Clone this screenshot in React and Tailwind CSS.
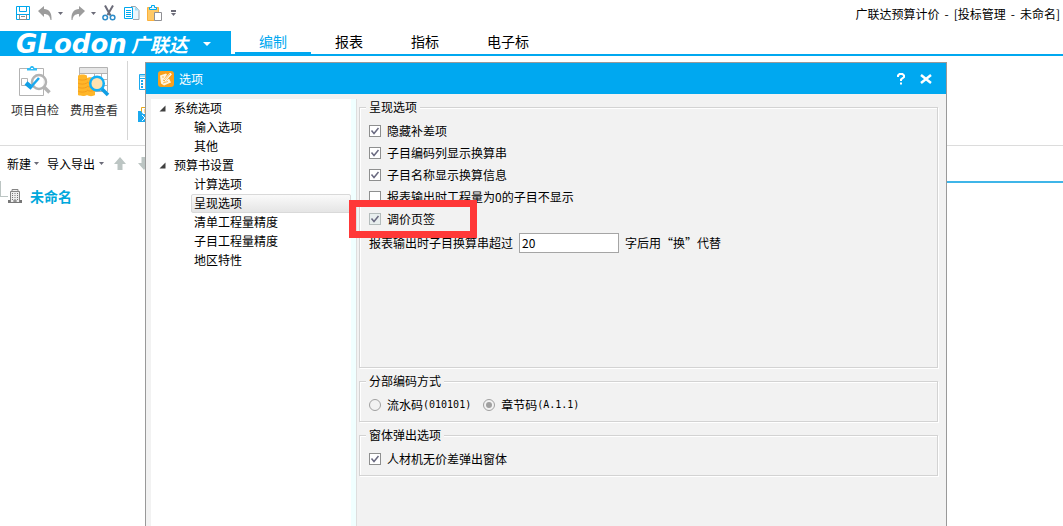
import React from "react";

function Caret({ className = "" }) {
  return (
    <svg className={className} width="5" height="3" viewBox="0 0 5 3" aria-hidden="true">
      <path d="M0 0h5L2.500 3z" fill="currentColor" />
    </svg>
  );
}

function SaveIcon() {
  return (
    <svg width="16" height="16" viewBox="0 0 16 16" fill="none">
      <path d="M1.500 1.500h13v13h-13z" stroke="#00a8ee" />
      <path d="M4.500 1.500v5h7v-5M2 9.500h12" stroke="#00a8ee" />
      <path d="M4.500 9.500v5h7v-5M6 11.500h4" stroke="#8b8b8b" />
    </svg>
  );
}

function UndoIcon({ flip = false }) {
  return (
    <svg width="14" height="14" viewBox="0 0 14 14" className={flip ? "-scale-x-100" : ""}>
      <path d="M0 5L6 0v3c5 0 8 3.500 7.500 11h-1C12 10 10 8 6 8v3z" fill="#9c9c9c" />
    </svg>
  );
}

function CutIcon() {
  return (
    <svg width="14" height="16" viewBox="0 0 14 16" fill="none">
      <path d="M3 .5l5.500 10M11 .5L5.500 10" stroke="#6b6b78" strokeWidth="2" />
      <circle cx="3.200" cy="12.500" r="2.300" stroke="#2d8cc8" strokeWidth="1.500" />
      <circle cx="10.600" cy="12.500" r="2.300" stroke="#2d8cc8" strokeWidth="1.500" />
    </svg>
  );
}

function CopyIcon() {
  return (
    <svg width="16" height="16" viewBox="0 0 16 16" fill="none">
      <path d="M7 1.500h4.500l3.500 4v9H9" fill="#eaf6fc" stroke="#a0a4a8" />
      <path d="M11 1.500v4h4z" fill="#9fdcf5" />
      <path d="M.5 2.500h8v11h-8z" fill="#fff" stroke="#00a8ee" />
      <path d="M2 5.500h5M2 7.500h5M2 9.500h5M2 11.500h5" stroke="#00a8ee" />
    </svg>
  );
}

function PasteIcon() {
  return (
    <svg width="16" height="17" viewBox="0 0 16 17" fill="none">
      <path d="M.5 2.500h11v13H.5z" fill="#ffc966" stroke="#fbb03b" />
      <path d="M2.500 4.500v-2h2v-2h3v2h2v2z" fill="#e8f8ff" stroke="#00a8ee" />
      <path d="M7.500 7.500h7v8h-7z" fill="#fff" stroke="#8f8f94" />
    </svg>
  );
}

function CheckProjectIcon() {
  return (
    <svg width="32" height="32" viewBox="0 0 32 32" fill="none">
      <path d="M.5 2.500h24v27H.5z" fill="#fff" stroke="#b3b3b3" />
      <path d="M2.500 12.500h6v7h-6z" stroke="#b3b3b3" />
      <path d="M8 4.500V2h2.500L12 0h2l1.500 2H18v2.500z" fill="#35bdf5" />
      <path d="M12 2.500h2" stroke="#fff" />
      <circle cx="20" cy="16" r="7" fill="#fff" fillOpacity=".85" stroke="#b3b3b3" strokeWidth="2.500" />
      <path d="M25 21l5.500 5.500" stroke="#b3b3b3" strokeWidth="3.500" />
      <path d="M7 17l6 5" stroke="#109fe5" strokeWidth="4.500" />
      <path d="M12 21l8-9" stroke="#1ba9ee" strokeWidth="2.500" />
    </svg>
  );
}

function FeeIcon() {
  return (
    <svg width="32" height="32" viewBox="0 0 32 32" fill="none">
      <path d="M1.500 1.500h28v24h-28z" fill="#fff" stroke="#b3b3b3" />
      <path d="M2 2h27v5H2z" fill="#e6e6e6" />
      <path d="M1 7.500h29M10 13.500h20M10 19.500h20M16.500 7v18M23.500 7v18" stroke="#b3b3b3" />
      <path d="M0 10c0-2 9-2 9 0v2c2-1.500 8-1 8 1.500V29c-2 1.500-6 1.500-8 0-2 1.500-7 1-9 0z" fill="#ffb629" />
      <path d="M0 13c2 1.500 6 1.500 9 0M0 17c2 1.500 6 1.500 9 0M0 21c2 1.500 6 1.500 9 0M0 25c2 1.500 6 1.500 9 0M9 16c2 1.500 5 1.500 8 0M9 20c2 1.500 5 1.500 8 0M9 24c2 1.500 5 1.500 8 0" stroke="#f0981a" strokeWidth=".8" />
      <circle cx="19" cy="17.500" r="6.800" fill="#ffe2b0" stroke="#14b0f5" strokeWidth="2.500" />
      <path d="M24 23l6 6" stroke="#109fe5" strokeWidth="3.500" />
    </svg>
  );
}

function CalculatorIcon() {
  return (
    <svg width="16" height="16" viewBox="0 0 16 16" fill="none">
      <path d="M1.500.5h13v15h-13z" fill="#fff" stroke="#1ba9ee" />
      <path d="M2 2h12" stroke="#9fdcf5" strokeWidth="2" />
      <path d="M2 4.500h12" stroke="#1ba9ee" />
      <path d="M3 7h2M7 7h2M3 10h2M7 10h2M3 13h2M7 13h2" stroke="#1ba9ee" strokeWidth="2" />
    </svg>
  );
}

function ExportIcon() {
  return (
    <svg width="16" height="16" viewBox="0 0 16 16" fill="none">
      <path d="M3.500.5h11v9h-11z" fill="#fff" stroke="#e8a91a" />
      <path d="M6 3h6M6 5h6" stroke="#ffb629" />
      <path d="M0 4h3l2 3h11v8H0z" fill="#1ba9ee" />
      <path d="M4 8l6 6M10 8l-6 6" stroke="#fff" />
    </svg>
  );
}

function MoveArrow({ down = false }) {
  return (
    <svg width="12" height="13" viewBox="0 0 12 13" className={down ? "rotate-180" : ""}>
      <path d="M6 0l6 7H8.500v6h-5V7H0z" fill="#bcc5c3" />
    </svg>
  );
}

function BuildingIcon() {
  return (
    <svg width="14" height="14" viewBox="0 0 14 14" fill="none">
      <path d="M4 2V.5h6V2M2.500 13V2.500h9V13" fill="#eee" stroke="#858585" />
      <path d="M4 4.500h1M6.500 4.500h1M9 4.500h1M4 6.500h1M6.500 6.500h1M9 6.500h1M4 8.500h1M6.500 8.500h1M9 8.500h1M4 10.500h1M9 10.500h1" stroke="#777" />
      <path d="M0 12.500h2M12 12.500h2" stroke="#777" strokeWidth="3" />
      <path d="M0 13.500h14M6 11h2v2H6z" stroke="#777" />
    </svg>
  );
}

function OptionsIcon() {
  return (
    <svg width="16" height="16" viewBox="0 0 16 16" fill="none">
      <rect width="16" height="16" rx="3" fill="#f9a01b" />
      <path d="M2 4.500l6-2 1 1-4 6 2 1 4-3 2 4-7 3-3-2z" fill="#fff3dc" />
      <path d="M6.500 9.500l6.500-7" stroke="#fff" strokeWidth="2.500" />
      <path d="M6 10l6-7" stroke="#f9a01b" strokeWidth=".7" />
      <path d="M4 6h2M5 12l5-1.500" stroke="#f9a01b" strokeWidth=".7" />
    </svg>
  );
}

const tabs = ["编制", "报表", "指标", "电子标"];

const tree = [
  { label: "系统选项", parent: true },
  { label: "输入选项" },
  { label: "其他" },
  { label: "预算书设置", parent: true },
  { label: "计算选项" },
  { label: "呈现选项", selected: true },
  { label: "清单工程量精度" },
  { label: "子目工程量精度" },
  { label: "地区特性" },
];

function Check({ label, checked = false, disabled = false, marked = false }) {
  return (
    <div className="relative flex h-[22px] items-center">
      <label className="flex items-center gap-1.5">
        <span className="grid">
          <input
            type="checkbox"
            defaultChecked={checked}
            disabled={disabled}
            className="peer col-start-1 row-start-1 size-3 appearance-none border border-[#8e8f8f] bg-white disabled:border-[#b4bcbc] disabled:bg-[#e8eeee]"
          />
          <svg
            className="pointer-events-none invisible col-start-1 row-start-1 peer-checked:visible"
            width="12"
            height="12"
            viewBox="0 0 12 12"
            fill="none"
          >
            <path d="M2.500 5.500L5 8.500l4.500-5.500" stroke="#6a6a80" strokeWidth="1.500" />
          </svg>
        </span>
        <span>{label}</span>
      </label>
      {marked && (
        <div className="pointer-events-none absolute -left-5 top-1/2 h-[38px] w-32 -translate-y-1/2 border-7 border-[#ff3838]" />
      )}
    </div>
  );
}

function Radio({ label, code, name, checked = false }) {
  return (
    <label className="flex items-center gap-1.5">
      <input
        type="radio"
        name={name}
        defaultChecked={checked}
        disabled
        className="size-3 appearance-none rounded-full border border-[#a0a0a0] bg-[#f2f2f2] bg-clip-content p-0.5 checked:bg-[#a0a0a0]"
      />
      <span className="flex items-center whitespace-pre">
        {label}
        <span className="font-['DejaVu_Sans_Mono',monospace] text-[10px]">{code}</span>
      </span>
    </label>
  );
}

function Group({ title, className = "", children }) {
  return (
    <fieldset
      className={
        "min-w-0 border border-[#d3d3d3] px-1.5 pb-[5px] shadow-[1px_1px_0_#fff,inset_1px_1px_0_#fff] " + className
      }
    >
      <legend className="h-4 bg-[#f2f2f2] px-[3px] leading-4">{title}</legend>
      <div className="px-[3px] pt-[5px]">{children}</div>
    </fieldset>
  );
}

function OptionsDialog() {
  return (
    <section
      role="dialog"
      aria-labelledby="options-title"
      className="absolute bottom-0 left-[145px] right-[116px] top-[62px] flex flex-col border border-b-0 border-[#999] bg-[#f2f2f2]"
    >
      <header className="flex h-[31px] shrink-0 items-center bg-[#00a8f0] pl-3 pr-3.5 text-white">
        <OptionsIcon />
        <h2 id="options-title" className="ml-[5px] text-xs">选项</h2>
        <div className="ml-auto flex items-center gap-3.5">
          <button type="button" aria-label="帮助" className="flex">
            <svg width="10" height="12" viewBox="0 0 10 12" fill="none">
              <path d="M2 4V2.500L3.500 1h3L8 2.500V4L5 6.500V8" stroke="#fff" strokeWidth="2" />
              <path d="M4 9.500h2v2H4z" fill="#fff" />
            </svg>
          </button>
          <button type="button" aria-label="关闭" className="flex">
            <svg width="12" height="10" viewBox="0 0 12 10">
              <path d="M1 1l10 8M11 1L1 9" stroke="#fff" strokeWidth="2.500" />
            </svg>
          </button>
        </div>
      </header>
      <div className="flex min-h-0 flex-1 pl-[5px] pt-[5px]">
        <ul className="w-[205px] shrink-0 border-r-5 border-[#f0ffff] bg-white">
          {tree.map((n) =>
            n.parent ? (
              <li key={n.label} className="flex h-[19px] items-center pl-2 leading-[18px]">
                <svg width="7" height="7" viewBox="0 0 7 7" aria-hidden="true">
                  <path d="M6.500.5v6h-6z" fill="#404040" />
                </svg>
                <span className="ml-2 pb-0.5">{n.label}</span>
              </li>
            ) : (
              <li key={n.label} className="h-[19px] pl-10">
                <button
                  type="button"
                  className={
                    "flex h-full w-full items-center rounded-xs border px-0.5 pb-0.5 " +
                    (n.selected
                      ? "border-[#d9d9d9] bg-linear-to-b from-[#fafafa] to-[#e5e5e5]"
                      : "border-transparent")
                  }
                >
                  {n.label}
                </button>
              </li>
            )
          )}
        </ul>
        <div className="flex min-w-0 flex-1 flex-col gap-[5px] border-l border-[#dedede] pl-0.5 pr-2">
          <Group title="呈现选项" className="min-h-[269px]">
            <Check label="隐藏补差项" checked />
            <Check label="子目编码列显示换算串" checked />
            <Check label="子目名称显示换算信息" checked />
            <Check label="报表输出时工程量为0的子目不显示" />
            <Check label="调价页签" checked disabled marked />
            <div className="flex h-[26px] items-center gap-1.5">
              <label htmlFor="max-length">报表输出时子目换算串超过</label>
              <input
                id="max-length"
                type="text"
                defaultValue="20"
                className="h-5 w-[100px] border border-[#a5a5a5] bg-white px-0.5 pb-0.5"
              />
              <span>字后用“换”代替</span>
            </div>
          </Group>
          <Group title="分部编码方式">
            <div className="flex h-[22px] items-center gap-3">
              <Radio name="coding" label="流水码" code="(010101)" />
              <Radio name="coding" label="章节码" code="(A.1.1)" checked />
            </div>
          </Group>
          <Group title="窗体弹出选项">
            <Check label="人材机无价差弹出窗体" checked />
          </Group>
        </div>
      </div>
    </section>
  );
}

export default function App() {
  return (
    <div
      lang="zh-CN"
      className="relative flex min-h-screen flex-col overflow-hidden bg-white font-['Noto_Sans_CJK_SC',sans-serif] text-xs text-black"
    >
      <header className="flex h-[31px] items-start justify-between pl-[15px] pr-[3px]">
        <div className="flex h-[26px] items-center text-[#6b6b78]">
          <button type="button" aria-label="保存"><SaveIcon /></button>
          <button type="button" aria-label="撤销" className="ml-[7px] flex items-center gap-1.5">
            <UndoIcon />
            <Caret />
          </button>
          <button type="button" aria-label="恢复" className="ml-2 flex items-center gap-1.5">
            <UndoIcon flip />
            <Caret />
          </button>
          <button type="button" aria-label="剪切" className="ml-1.5"><CutIcon /></button>
          <button type="button" aria-label="复制" className="ml-2"><CopyIcon /></button>
          <button type="button" aria-label="粘贴" className="ml-[7px]"><PasteIcon /></button>
          <button type="button" aria-label="自定义" className="ml-2 flex flex-col gap-px">
            <span className="h-0.5 w-[5px] bg-current" />
            <Caret />
          </button>
        </div>
        <h1 className="flex gap-[5px] leading-[28px]">
          <span>广联达预算计价</span>
          <span>-</span>
          <span className="flex gap-[5px]">
            <span>[投标管理</span>
            <span>-</span>
            <span>未命名]</span>
          </span>
        </h1>
      </header>

      <nav className="flex h-[25px] items-stretch border-b-2 border-[#00a8f0]">
        <button
          type="button"
          className="-mb-0.5 flex w-[231px] items-center bg-[#00a8f0] pl-4 text-white"
        >
          <span className="font-['DejaVu_Sans',sans-serif] text-[26px] leading-none font-bold italic">GLodon</span>
          <span className="ml-1 w-[72px] text-left text-[19px] leading-none font-bold italic">广联达</span>
          <svg width="8" height="4" viewBox="0 0 8 4" aria-hidden="true">
            <path d="M0 0h8L4 4z" fill="#fff" />
          </svg>
        </button>
        <div className="flex pl-1 text-sm">
          {tabs.map((t, i) => (
            <button
              key={t}
              type="button"
              className={
                "border-b-2 px-6 leading-[21px] " +
                (i === 0 ? "border-[#00a8f0] text-[#00a8f0]" : "border-transparent")
              }
            >
              {t}
            </button>
          ))}
        </div>
      </nav>

      <div className="flex h-[90px] items-start border-b border-[#dcdcdc] pl-[11px] pt-[5px] text-[#333]">
        <button type="button" className="flex w-12 flex-col items-center gap-1 pt-[5px] whitespace-nowrap">
          <CheckProjectIcon />
          项目自检
        </button>
        <button type="button" className="ml-[11px] flex w-12 flex-col items-center gap-1 pt-[5px] whitespace-nowrap">
          <FeeIcon />
          费用查看
        </button>
        <div className="ml-[9px] h-[79px] w-px bg-[#d5d5d5]" />
        <div className="ml-[10px] flex flex-col gap-[17px] pt-[13px]">
          <CalculatorIcon />
          <ExportIcon />
        </div>
      </div>

      <main className="flex flex-1">
        <aside className="w-[240px] shrink-0">
          <div className="flex h-[35px] items-center pl-[7px]">
            <button type="button" className="flex items-center gap-[3px]">
              新建 <Caret className="text-[#6b6b78]" />
            </button>
            <button type="button" className="ml-2 flex items-center gap-1">
              导入导出 <Caret className="text-[#6b6b78]" />
            </button>
            <button type="button" aria-label="上移" className="ml-2.5"><MoveArrow /></button>
            <button type="button" aria-label="下移" className="ml-3"><MoveArrow down /></button>
          </div>
          <div className="flex items-start">
            <span className="h-4 w-2 border-b border-l border-[#bcc5c3]" />
            <div className="flex h-[30px] items-center gap-2 text-sm font-bold text-[#00a8dc]">
              <BuildingIcon />
              未命名
            </div>
          </div>
        </aside>
        <div className="mt-[35px] flex-1 border-t-2 border-[#3fb5e8]" />
      </main>

      <OptionsDialog />
    </div>
  );
}
